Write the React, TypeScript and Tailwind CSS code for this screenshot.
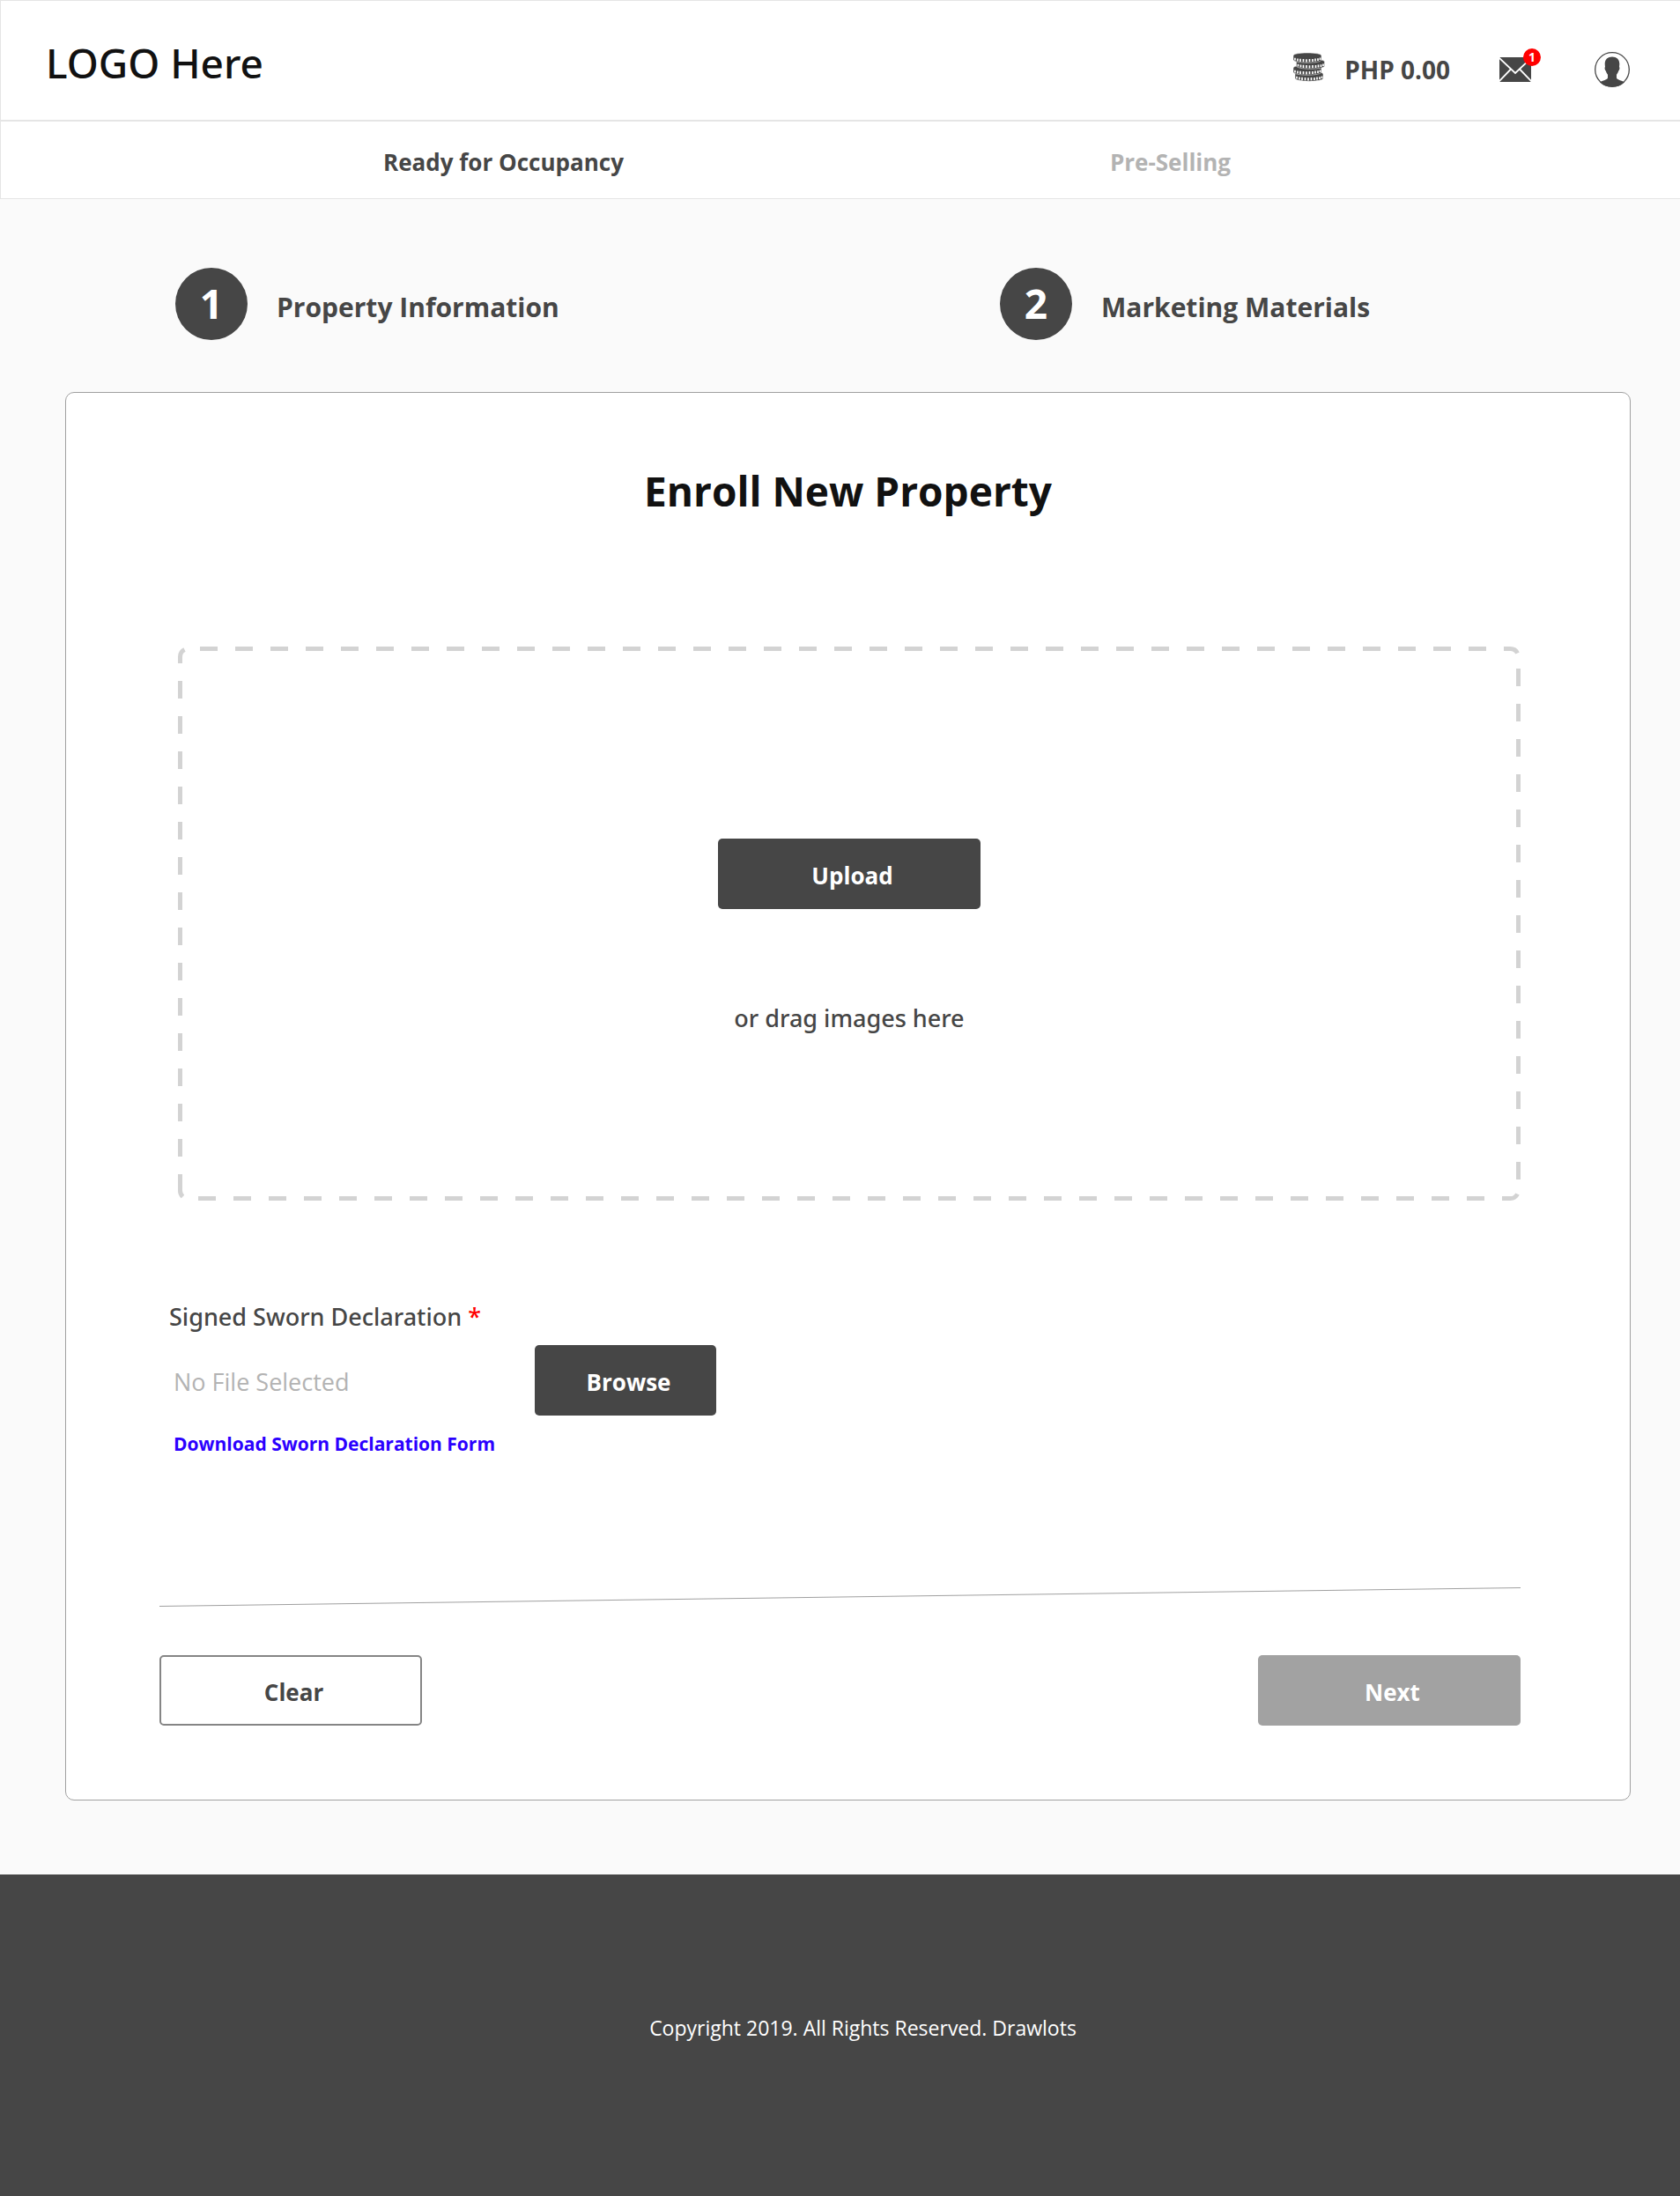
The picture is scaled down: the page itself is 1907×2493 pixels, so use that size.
import type { ReactNode } from "react";

function Coin({ x, y }: { x: number; y: number }) {
  return (
    <g transform={`translate(${x} ${y})`}>
      <path d="M0 3.2C0 1.2 7 0 16 0s16 1.2 16 3.2v4.6c0 2-7 3.4-16 3.4S0 9.8 0 7.8Z" fill="#464646" stroke="#fff" strokeWidth="0.5" />
      <path
        d="M2 5.8v2.6M5 6.400v3M8 6.800v3.100M11.500 7.100v3.200M15 7.200v3.200M18.500 7.100v3.200M22 6.900v3.100M25 6.600v3M28 6.200v2.900M30.500 5.600v2.400"
        stroke="#fff"
        strokeWidth="1.7"
      />
    </g>
  );
}

function CoinsIcon() {
  return (
    <svg width="36" height="40" viewBox="0 0 36 40" aria-hidden="true">
      <Coin x={2} y={22} />
      <Coin x={0} y={15} />
      <Coin x={3.5} y={8} />
      <Coin x={0} y={1} />
    </svg>
  );
}

function MailIcon() {
  return (
    <svg width="38" height="28" viewBox="0 0 38 28" aria-hidden="true">
      <rect x="1" y="0" width="36" height="28" fill="#464646" />
      <path d="M0 0 19 18 38 0M0 28 14 13.5M38 28 24 13.5" fill="none" stroke="#fff" strokeWidth="1.8" />
    </svg>
  );
}

function UserIcon() {
  return (
    <svg width="40" height="40" viewBox="0 0 40 40" aria-hidden="true">
      <circle cx="20" cy="20" r="19.3" fill="#fff" stroke="#464646" strokeWidth="1.3" />
      <path
        d="M20 5.500c5 0 8.300 2.700 8.300 8 0 1.300-.2 2.500-.3 3.500.8.500.5 3.500-.8 4.500-.5 1.800-1.200 3-2.200 4.200v3.500c0 2 6 3.500 9.200 5A19.500 19.500 0 0 1 20 39.500 19.500 19.500 0 0 1 5.800 34.200c3.200-1.500 9.200-3 9.200-5v-3.500c-1-1.200-1.700-2.400-2.200-4.200-1.300-1-1.600-4-.8-4.500-.1-1-.3-2.200-.3-3.500 0-5.300 3.300-8 8.300-8Z"
        fill="#464646"
      />
    </svg>
  );
}

function DashedOutline() {
  return (
    <div className="pointer-events-none absolute top-[2px] right-[3px] bottom-[3px] left-[2px]">
      <svg className="size-full overflow-visible" aria-hidden="true">
        <g transform="translate(0.5 0.5)" fill="none" stroke="#d3d3d3" strokeWidth="5">
          <g strokeDasharray="20 20">
            <line x1="22.5" y1="0" x2="98.7%" y2="0" />
            <line x1="100%" y1="22.5" x2="100%" y2="97%" />
            <line x1="20.5" y1="100%" x2="98.7%" y2="100%" />
            <line x1="0" y1="36.5" x2="0" y2="94%" />
          </g>
          <path d="M0 16.5V9A9 9 0 0 1 5 1" />
          <svg x="100%" className="overflow-visible">
            <path d="M-16.5 0H-9A9 9 0 0 1-1 5" />
          </svg>
          <svg x="100%" y="100%" className="overflow-visible">
            <path d="M-18.5 0H-9A9 9 0 0 0-1-5" />
          </svg>
          <svg y="100%" className="overflow-visible">
            <path d="M0-27.5V-9A9 9 0 0 0 3-2" />
          </svg>
        </g>
      </svg>
    </div>
  );
}

function Step({ n, children }: { n: number; children: ReactNode }) {
  return (
    <li className="flex items-center gap-[33px]">
      <span className="flex size-[82px] items-center justify-center rounded-full bg-[#464646] pb-[2px] text-[46px] leading-none font-bold text-white">
        {n}
      </span>
      <span className="pt-2 text-[30px] leading-[40px] font-bold">{children}</span>
    </li>
  );
}

const button = "h-20 rounded-[5px] pt-[3px] pl-[7px] text-[26px] leading-[40px] font-bold";

export default function App() {
  return (
    <div className="flex min-h-screen flex-col bg-[#fafafa] font-['Open_Sans',sans-serif] text-[#464646]">
      <header className="flex h-[138px] items-center justify-between border-t border-b-2 border-l border-[#e5e5e5] bg-white pr-[57px] pl-[51px]">
        <a href="#" className="pt-[5px] font-['Noto_Sans',sans-serif] text-[46px] leading-[64px] font-medium text-[#111]">
          LOGO Here
        </a>
        <div className="flex items-center pt-5">
          <CoinsIcon />
          <span className="ml-[22px] text-[28px] leading-[40px] font-bold">PHP 0.00</span>
          <button type="button" aria-label="Messages" className="relative ml-[55px]">
            <MailIcon />
            <span className="absolute -top-[10px] -right-[10px] flex size-5 items-center justify-center rounded-full bg-[#f00] text-[14px] leading-none font-bold text-white">
              1
            </span>
          </button>
          <button type="button" aria-label="Account" className="ml-[71px]">
            <UserIcon />
          </button>
        </div>
      </header>

      <nav className="grid h-[88px] grid-cols-2 items-center border-b border-l border-[#e5e5e5] bg-white pt-1 pr-[200px] pl-[192px] text-center text-[26px] leading-[40px] font-bold">
        <a href="#">Ready for Occupancy</a>
        <a href="#" className="text-[#b3b3b3]">
          Pre-Selling
        </a>
      </nav>

      <ol className="mt-[78px] grid grid-cols-[936fr_772fr] pl-[199px]">
        <Step n={1}>Property Information</Step>
        <Step n={2}>Marketing Materials</Step>
      </ol>

      <main className="mt-[59px] mr-14 ml-[74px] rounded-[10px] border border-[#a0a0a0] bg-white pt-[79px] pb-[84px]">
        <h1 className="text-center text-[46px] leading-[64px] font-bold text-[#111]">Enroll New Property</h1>

        <form className="mt-[145px] pr-[124px] pl-[106px]">
          <div className="relative ml-[21px] flex h-[629px] flex-col items-center pt-[218px]">
            <DashedOutline />
            <button type="button" className={`${button} w-[298px] bg-[#464646] text-white`}>
              Upload
            </button>
            <p className="mt-[104px] font-['Noto_Sans',sans-serif] text-[27px] leading-[40px] font-medium">or drag images here</p>
          </div>

          <label
            htmlFor="declaration"
            className="mt-28 ml-[11px] block font-['Noto_Sans',sans-serif] text-[27px] leading-[40px] font-medium"
          >
            Signed Sworn Declaration <span className="text-[#f00]">*</span>
          </label>
          <div className="mt-3 ml-4 flex items-center">
            <input
              id="declaration"
              type="text"
              readOnly
              placeholder="No File Selected"
              className="w-[410px] bg-transparent pt-1 text-[27px] leading-[40px] placeholder:text-[#b3b3b3]"
            />
            <button type="button" className={`${button} w-[206px] bg-[#464646] text-white`}>
              Browse
            </button>
          </div>
          <a href="#" className="mt-4 ml-4 block w-fit text-[21px] leading-[32px] font-bold text-[#2b00ff]">
            Download Sworn Declaration Form
          </a>

          <svg className="mt-[147px] block h-[22px] w-full" aria-hidden="true">
            <line x1="0" y1="21.5" x2="100%" y2="0.5" stroke="#a0a0a0" />
          </svg>

          <div className="mt-[55px] flex justify-between">
            <button type="reset" className={`${button} w-[298px] border-2 border-[#858585] bg-white`}>
              Clear
            </button>
            <button type="button" className={`${button} w-[298px] bg-[#a2a2a2] text-white`}>
              Next
            </button>
          </div>
        </form>
      </main>

      <footer className="mt-[84px] flex grow items-center justify-center bg-[#464646] pb-[17px] pl-[52px] text-[23px] leading-[32px] text-white">
        <p>Copyright 2019. All Rights Reserved. Drawlots</p>
      </footer>
    </div>
  );
}
